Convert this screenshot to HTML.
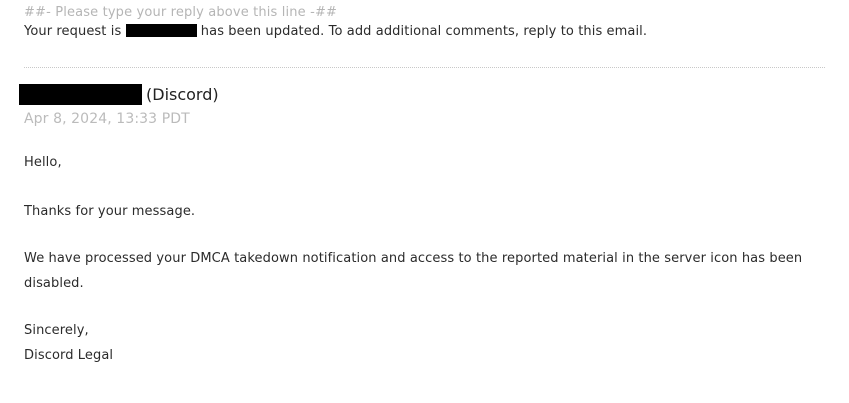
<!DOCTYPE html>
<html><head><meta charset="utf-8"><style>
body{margin:0;background:#fff;width:849px;height:403px;overflow:hidden;font-family:"DejaVu Sans","Liberation Sans",sans-serif;font-size:13px;color:#2b2b2b;letter-spacing:0.1px;}
.a{position:absolute;white-space:nowrap;line-height:16px;}
.box{display:inline-block;background:#000;vertical-align:middle;}
</style></head><body>
<div class="a" style="left:24px;top:5px;color:#b5b5b5;letter-spacing:0.15px;">##- Please type your reply above this line -##</div>
<div class="a" style="left:24px;top:24px;">Your request is <span class="box" style="width:71px;height:13px;margin:-3px 0 0 0"></span> has been updated. To add additional comments, reply to this email.</div>
<div style="position:absolute;left:24px;top:67px;width:801px;border-top:1px dotted #c8c8c8;"></div>
<div style="position:absolute;left:19px;top:84px;width:123px;height:21px;background:#000;"></div>
<div class="a" style="left:146px;top:85px;font-size:16px;line-height:20px;color:#222;letter-spacing:0;">(Discord)</div>
<div class="a" style="left:24px;top:111px;color:#bbb;font-size:14px;">Apr 8, 2024, 13:33 PDT</div>
<div class="a" style="left:24px;top:155px;">Hello,</div>
<div class="a" style="left:24px;top:204px;">Thanks for your message.</div>
<div class="a" style="left:24px;top:251px;">We have processed your DMCA takedown notification and access to the reported material in the server icon has been</div>
<div class="a" style="left:24px;top:276px;">disabled.</div>
<div class="a" style="left:24px;top:323px;">Sincerely,</div>
<div class="a" style="left:24px;top:348px;">Discord Legal</div>
</body></html>
